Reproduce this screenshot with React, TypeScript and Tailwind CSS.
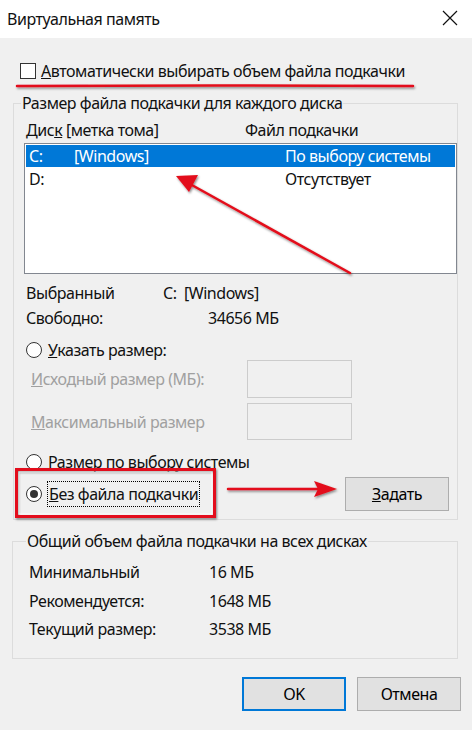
import * as React from 'react';

const font = { fontFamily: '"Noto Sans", "Open Sans", sans-serif' };

function Radio(props: { checked?: boolean }) {
  return (
    <span className="w-[16px] h-[16px] rounded-full border border-[#333] bg-white flex items-center justify-center shrink-0">
      {props.checked ? <span className="w-[8px] h-[8px] rounded-full bg-[#333]" /> : null}
    </span>
  );
}

function Btn(props: { children: React.ReactNode; primary?: boolean; className?: string }) {
  return (
    <div
      className={
        'h-[34px] w-[104px] flex items-center justify-center bg-[#e1e1e1] text-black ' +
        (props.primary ? 'border-2 border-[#0078d7] ' : 'border border-[#adadad] ') +
        (props.className || '')
      }
    >
      {props.children}
    </div>
  );
}

export default function App() {
  return (
    <div className="w-[472px] h-[730px] bg-[#f0f0f0] relative overflow-hidden text-[16px] tracking-[-0.45px] text-[#111] leading-[20px]" style={font}>
      {/* title bar */}
      <div className="h-[38px] bg-white flex items-center justify-between pl-[7px] pr-[14px]">
        <span>Виртуальная память</span>
        <svg width="16" height="16" viewBox="0 0 16 16" className="mt-[-2px]">
          <path d="M1 1 L15 15 M15 1 L1 15" stroke="#111" strokeWidth="1.2" fill="none" />
        </svg>
      </div>

      {/* auto checkbox */}
      <div className="mt-[25px] ml-[20px] h-[16px] flex items-center gap-[5px]">
        <span className="w-[16px] h-[16px] border border-[#333] bg-white shrink-0" />
        <span>
          <u>А</u>втоматически выбирать объем файла подкачки
        </span>
      </div>

      {/* per-disk group */}
      <fieldset className="mt-[14px] ml-[13px] w-[445px] border border-[#dcdcdc] pl-[10px] pb-[8px]">
        <legend className="ml-[-3px] px-[1px] leading-[20px]">Размер файла подкачки для каждого диска</legend>
        <div className="mt-[7px] h-[20px] flex">
          <span className="ml-[2px] w-[219px]">
            Дис<u>к</u> [метка тома]
          </span>
          <span>Файл подкачки</span>
        </div>
        <div className="mt-[3px] w-[433px] h-[131px] border border-[#828790] bg-white p-[1px]">
          <div className="h-[22px] bg-[#0078d7] text-white flex items-center pl-[3px]">
            <span className="w-[45px]">C:</span>
            <span className="w-[211px]">[Windows]</span>
            <span>По выбору системы</span>
          </div>
          <div className="h-[23px] flex items-center pl-[3px]">
            <span className="w-[256px]">D:</span>
            <span>Отсутствует</span>
          </div>
        </div>

        <div className="mt-[9px] h-[20px] flex">
          <span className="ml-[2px] w-[137px]">Выбранный</span>
          <span>C:&nbsp;&nbsp;[Windows]</span>
        </div>
        <div className="mt-[5px] h-[20px] flex">
          <span className="ml-[2px] w-[182px]">Свободно:</span>
          <span>34656 МБ</span>
        </div>

        <div className="mt-[12px] h-[20px] flex items-center gap-[6px] ml-[2px]">
          <Radio />
          <span>
            <u>У</u>казать размер:
          </span>
        </div>
        <div className="h-[38px] flex items-center text-[#a0a0a0]">
          <span className="ml-[7px] w-[216px]">
            <u>И</u>сходный размер (МБ):
          </span>
          <span className="w-[105px] h-[38px] border border-[#cccccc] bg-[#f0f0f0]" />
        </div>
        <div className="mt-[5px] h-[37px] flex items-center text-[#a0a0a0]">
          <span className="ml-[7px] w-[216px]">
            <u>М</u>аксимальный размер
          </span>
          <span className="w-[105px] h-[37px] border border-[#cccccc] bg-[#f0f0f0]" />
        </div>

        <div className="mt-[12px] h-[20px] flex items-center gap-[6px] ml-[2px]">
          <Radio />
          <span>Размер по выбору системы</span>
        </div>
        <div className="mt-[4px] h-[35px] flex items-center">
          <div className="ml-[2px] w-[319px] flex items-center gap-[5px]">
            <Radio checked />
            <span className="border border-dotted border-black h-[26px] px-[1px] flex items-center">
              <u>Б</u>ез файла подкачки
            </span>
          </div>
          <Btn>
            <span>
              <u>З</u>адать
            </span>
          </Btn>
        </div>
      </fieldset>

      {/* totals group */}
      <fieldset className="mt-[11px] ml-[12px] w-[446px] border border-[#dcdcdc] pl-[16px] pb-[19px]">
        <legend className="ml-[-3px] px-[1px] leading-[20px]">Общий объем файла подкачки на всех дисках</legend>
        <div className="mt-[11px] h-[20px] flex">
          <span className="w-[180px]">Минимальный</span>
          <span>16 МБ</span>
        </div>
        <div className="mt-[9px] h-[20px] flex">
          <span className="w-[180px]">Рекомендуется:</span>
          <span>1648 МБ</span>
        </div>
        <div className="mt-[8px] h-[20px] flex">
          <span className="w-[180px]">Текущий размер:</span>
          <span>3538 МБ</span>
        </div>
      </fieldset>

      <div className="mt-[18px] flex justify-end gap-[11px] pr-[11px]">
        <Btn primary>OK</Btn>
        <Btn>Отмена</Btn>
      </div>

      {/* red annotations drawn over the dialog */}
      <svg className="absolute left-0 top-0 pointer-events-none" width="472" height="730" viewBox="0 0 472 730">
        <defs>
          <filter id="sh" x="-10%" y="-10%" width="120%" height="130%">
            <feDropShadow dx="1" dy="1.5" stdDeviation="1.2" floodColor="#000" floodOpacity="0.45" />
          </filter>
        </defs>
        <g filter="url(#sh)">
          <path d="M17 86 Q215 85 413 86" stroke="#e3101a" strokeWidth="2.5" fill="none" strokeLinecap="round" />
          <line x1="350" y1="273" x2="190" y2="184" stroke="#e3101a" strokeWidth="2.5" strokeLinecap="round" />
          <polygon points="176,176 198,175 189,192" fill="#e3101a" />
          <rect x="16.5" y="469.5" width="198" height="47" fill="none" stroke="#e3101a" strokeWidth="3" />
          <line x1="228" y1="489" x2="320" y2="489" stroke="#e3101a" strokeWidth="2.5" strokeLinecap="round" />
          <polygon points="337,489 314,481 318,489 314,497" fill="#e3101a" />
        </g>
        <rect x="19" y="472" width="193" height="42" fill="none" stroke="#ffffff" strokeWidth="1" opacity="0.8" />
      </svg>
    </div>
  );
}
